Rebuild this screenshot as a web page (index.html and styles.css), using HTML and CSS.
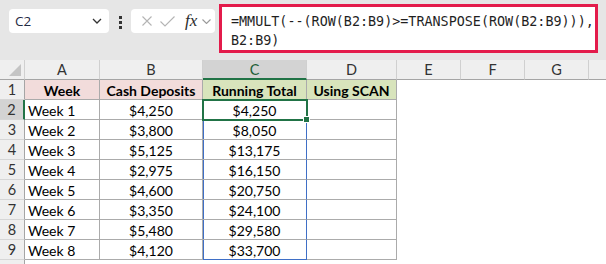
FILE: index.html
```html
<!DOCTYPE html>
<html lang="en">
<head>
    <meta charset="UTF-8">
    <title>Running Total - MMULT</title>
    <link rel="stylesheet" href="styles.css">
</head>
<body>
    <div class="formula-bar">
        <div class="name-box">
            <span>C2</span>
            <svg class="chev" width="10" height="6" viewBox="0 0 10 6"><path d="M1 1 L5 5 L9 1" fill="none" stroke="#333" stroke-width="1.3"/></svg>
        </div>
        <div class="dots"><i></i><i></i><i></i></div>
        <div class="fx-box">
            <svg width="10" height="10" viewBox="0 0 10 10"><path d="M0.5 0.5 L9.5 9.5 M9.5 0.5 L0.5 9.5" stroke="#b4b4b4" stroke-width="1.1"/></svg>
            <svg width="15" height="11" viewBox="0 0 15 11"><path d="M0.5 5.5 L5 10 L14.5 0.5" fill="none" stroke="#b4b4b4" stroke-width="1.1"/></svg>
            <span class="fx">fx</span>
            <svg width="9" height="5" viewBox="0 0 9 5"><path d="M0.5 0.5 L4.5 4.5 L8.5 0.5" fill="none" stroke="#9a9a9a" stroke-width="1.1"/></svg>
        </div>
        <div class="formula">=MMULT(--(ROW(B2:B9)&gt;=TRANSPOSE(ROW(B2:B9))),<br>B2:B9)</div>
    </div>

    <div class="sheet-wrap">
    <div class="sheet">
        <div class="hd corner"><span class="tri"></span></div>
        <div class="hd">A</div>
        <div class="hd">B</div>
        <div class="hd sel-col">C</div>
        <div class="hd">D</div>
        <div class="hd">E</div>
        <div class="hd">F</div>
        <div class="hd">G</div>
        <div class="hd"></div>

        <div class="rh">1</div>
        <div class="c th pink">Week</div>
        <div class="c th pink">Cash Deposits</div>
        <div class="c th green">Running Total</div>
        <div class="c th green">Using SCAN</div>
        <div class="e"></div><div class="e"></div><div class="e"></div><div class="e"></div>

        <div class="rh sel-row">2</div>
        <div class="c l">Week 1</div>
        <div class="c">$4,250</div>
        <div class="c active">$4,250<span class="handle"></span></div>
        <div class="c"></div>
        <div class="e"></div><div class="e"></div><div class="e"></div><div class="e"></div>

        <div class="rh">3</div>
        <div class="c l">Week 2</div>
        <div class="c">$3,800</div>
        <div class="c spill">$8,050</div>
        <div class="c"></div>
        <div class="e"></div><div class="e"></div><div class="e"></div><div class="e"></div>

        <div class="rh">4</div>
        <div class="c l">Week 3</div>
        <div class="c">$5,125</div>
        <div class="c spill">$13,175</div>
        <div class="c"></div>
        <div class="e"></div><div class="e"></div><div class="e"></div><div class="e"></div>

        <div class="rh">5</div>
        <div class="c l">Week 4</div>
        <div class="c">$2,975</div>
        <div class="c spill">$16,150</div>
        <div class="c"></div>
        <div class="e"></div><div class="e"></div><div class="e"></div><div class="e"></div>

        <div class="rh">6</div>
        <div class="c l">Week 5</div>
        <div class="c">$4,600</div>
        <div class="c spill">$20,750</div>
        <div class="c"></div>
        <div class="e"></div><div class="e"></div><div class="e"></div><div class="e"></div>

        <div class="rh">7</div>
        <div class="c l">Week 6</div>
        <div class="c">$3,350</div>
        <div class="c spill">$24,100</div>
        <div class="c"></div>
        <div class="e"></div><div class="e"></div><div class="e"></div><div class="e"></div>

        <div class="rh">8</div>
        <div class="c l">Week 7</div>
        <div class="c">$5,480</div>
        <div class="c spill">$29,580</div>
        <div class="c"></div>
        <div class="e"></div><div class="e"></div><div class="e"></div><div class="e"></div>

        <div class="rh">9</div>
        <div class="c l">Week 8</div>
        <div class="c">$4,120</div>
        <div class="c spill last">$33,700</div>
        <div class="c"></div>
        <div class="e"></div><div class="e"></div><div class="e"></div><div class="e"></div>

        <div class="rh short"></div>
    </div>
    </div>
</body>
</html>
```
FILE: styles.css
```css
body {
    margin: 0;
    background: #fff;
    font-family: Lato, "Liberation Sans", sans-serif;
}
.formula-bar {
    display: flex;
    align-items: flex-start;
    height: 60px;
    padding-left: 9px;
    background: #e6e6e6;
    box-sizing: border-box;
}
.name-box {
    display: flex;
    align-items: center;
    justify-content: space-between;
    margin-top: 9px;
    width: 100px;
    height: 24px;
    padding: 0 7px 0 6px;
    box-sizing: border-box;
    background: #fff;
    border-radius: 4px;
    font-family: "Open Sans", sans-serif;
    font-size: 13.5px;
    color: #1f2a44;
}
.dots {
    display: flex;
    flex-direction: column;
    align-items: center;
    gap: 2px;
    width: 22px;
    margin-top: 16px;
}
.dots i {
    width: 3px;
    height: 3px;
    background: #333;
}
.fx-box {
    display: flex;
    align-items: center;
    margin-top: 9px;
    width: 84px;
    height: 24px;
    padding-left: 11px;
    box-sizing: border-box;
    background: #fff;
    border-radius: 4px;
    gap: 8px;
}
.fx-box .fx {
    font-family: "Liberation Serif", serif;
    font-style: italic;
    font-size: 17px;
    color: #2b2b2b;
    margin-left: 2px;
    margin-right: -3px;
}
.formula {
    margin: 4px 0 0 4px;
    width: 379px;
    height: 49px;
    padding: 5px 7px 5px 9px;
    box-sizing: border-box;
    background: #fff;
    border: 3px solid #e31b4b;
    font-family: "DejaVu Sans Mono", monospace;
    font-size: 13.4px;
    line-height: 19px;
    color: #1f1f1f;
    white-space: nowrap;
    overflow: hidden;
}
.sheet-wrap {
    width: 606px;
    height: 204px;
    overflow: hidden;
}
.sheet {
    display: grid;
    grid-template-columns: 25px 75px 103px 104px 90px 64px 64px 64px 64px;
    grid-auto-rows: 20px;
    font-size: 14px;
    color: #000;
}
.sheet > div {
    box-sizing: border-box;
    display: flex;
    align-items: center;
    justify-content: center;
    white-space: nowrap;
}
.hd {
    background: #efefef;
    border-right: 1px solid #d0d0d0;
    border-bottom: 1px solid #a5a5a5;
    color: #333;
    font-size: 14.5px;
}
.corner {
    position: relative;
}
.tri {
    position: absolute;
    right: 3px;
    bottom: 3px;
    width: 0;
    height: 0;
    border-left: 12px solid transparent;
    border-bottom: 12px solid #c4c4c4;
}
.sel-col {
    background: #d3d3d3;
    border-bottom: 2px solid #217346;
    color: #1f5f38;
}
.rh {
    background: #efefef;
    border-right: 1px solid #a5a5a5;
    border-bottom: 1px solid #d6d6d6;
    color: #333;
    font-size: 14.5px;
}
.sel-row {
    background: #d3d3d3;
    border-right: 2px solid #217346;
}
.c {
    border-right: 1px solid #ababab;
    border-bottom: 1px solid #ababab;
    padding-top: 1px;
}
.c.l {
    justify-content: flex-start;
    padding-left: 3px;
}
.th {
    font-weight: bold;
}
.pink {
    background: #f2dcdb;
}
.green {
    background: #d8e4bc;
}
.active {
    position: relative;
    outline: 2px solid #217346;
    outline-offset: -1px;
}
.handle {
    position: absolute;
    right: -4px;
    bottom: -4px;
    width: 5px;
    height: 5px;
    background: #217346;
    border: 1px solid #fff;
}
.spill {
    border-right-color: #3f6fc6;
    box-shadow: inset 1px 0 0 #3f6fc6;
}
.spill.last {
    border-bottom-color: #3f6fc6;
}
.e {
    background: #fff;
}
```
